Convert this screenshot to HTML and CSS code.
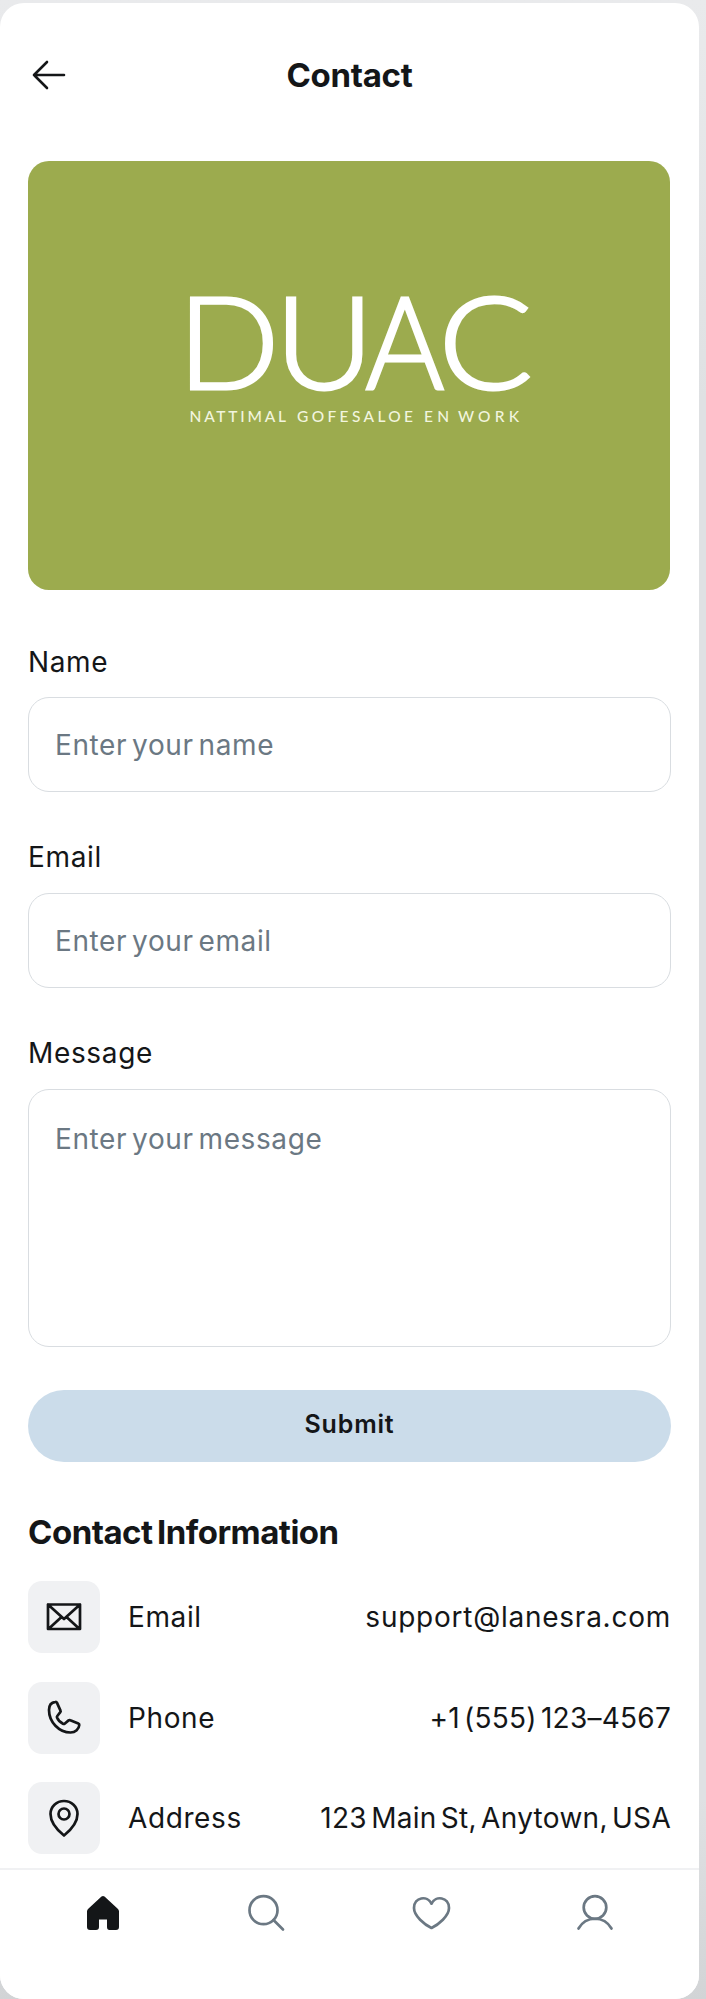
FILE: index.html
```html
<!DOCTYPE html>
<html lang="en">
<head>
<meta charset="utf-8">
<title>Contact</title>
<link rel="stylesheet" href="styles.css">
</head>
<body>
<main class="screen">
  <header class="topbar">
    <svg class="back" viewBox="0 0 42 42"><path d="M36 21H6M19 8 6 21l13 13"/></svg>
    <h1 class="title">Contact</h1>
  </header>
  <svg class="hero" viewBox="0 0 642 429">
    <g class="brand">
      <text transform="translate(149.500 227.500) scale(1.040 1)">D</text>
      <text transform="translate(246.500 227.500) scale(1.060 1)">U</text>
      <text transform="translate(337.500 227.500) scale(.930 1)">A</text>
      <text transform="translate(410.500 227.500) scale(1.080 1)">C</text>
    </g>
    <text class="tagline" y="260.500"><tspan x="161.500" textLength="96">NATTIMAL</tspan> <tspan x="269" textLength="116">GOFESALOE</tspan> <tspan x="396" textLength="25">EN</tspan> <tspan x="430" textLength="61">WORK</tspan></text>
  </svg>
  <form class="form">
    <label class="field"><span class="label">Name</span><input class="control" placeholder="Enter your name"></label>
    <label class="field"><span class="label">Email</span><input class="control" placeholder="Enter your email"></label>
    <label class="field"><span class="label">Message</span><textarea class="control area" placeholder="Enter your message"></textarea></label>
    <button class="submit" type="button">Submit</button>
  </form>
  <section class="info">
    <h2 class="heading">Contact Information</h2>
    <div class="row">
      <span class="tile"><svg class="icon" viewBox="0 0 44 44"><path d="M6 9.500h32v24.500H6zM6 9.500l16 14.500 16-14.500M7 33.500l12.500-11.500M37 33.500 24.500 22"/></svg></span>
      <span class="key">Email</span><span class="value v-email">support@lanesra.com</span>
    </div>
    <div class="row">
      <span class="tile"><svg class="icon" viewBox="0 0 44 44"><path d="M13.500 5.800C10 6.200 7 8.500 7 14c0 12 10 22.500 21.500 22.500 5 0 8.500-3.500 8.800-7.500.1-.8-.3-1.300-1-1.600l-8-3.200c-.7-.3-1.200-.2-1.700.2l-4 3.300c-.5.4-1 .4-1.600.1-3-1.600-5-3.800-6-6.300-.2-.6-.1-1 .3-1.500l3-3.800c.4-.5.5-1 .2-1.600l-3.600-8c-.3-.6-.8-.9-1.400-.8z"/></svg></span>
      <span class="key">Phone</span><span class="value v-phone">+1 (555) 123–4567</span>
    </div>
    <div class="row">
      <span class="tile"><svg class="icon" viewBox="0 0 44 44"><path d="M22 39.500c-5-4-13.500-12.500-13.500-21.500a13.500 13 0 0 1 27 0c0 9-8.500 17.500-13.500 21.500z"/><circle cx="22" cy="18" r="5.500"/></svg></span>
      <span class="key">Address</span><span class="value v-address">123 Main St, Anytown, USA</span>
    </div>
  </section>
  <nav class="nav">
    <svg class="tab active" viewBox="0 0 44 44"><path d="M20.500 5.600q1.500-1.400 3 0L37 18q1 1 1 2.500V36q0 3-3 3h-6.500q-2.500 0-2.500-3v-7.500h-8V36q0 3-3 3H9q-3 0-3-3V20.500Q6 19 7 18z"/></svg>
    <svg class="tab" viewBox="0 0 44 44"><circle cx="18.500" cy="19.200" r="14"/><path d="m28.500 29 9.500 9.500"/></svg>
    <svg class="tab" viewBox="0 0 44 44"><path d="M22.500 37C15.500 33.500 5 25 5 17 5 6 18.500 4 22.500 12.700 26.500 4 40 6 40 17c0 8-10.500 16.500-17.500 20z"/></svg>
    <svg class="tab" viewBox="0 0 44 44"><circle cx="22" cy="16.500" r="11.300"/><path d="M5.500 37.500C13 24.500 31 24.500 38.500 37.500"/></svg>
  </nav>
</main>
</body>
</html>
```
FILE: styles.css
```css
* { box-sizing: border-box; }
body {
  margin: 0;
  height: 1999px;
  padding: 3px 7px 0 0;
  background: linear-gradient(#e9eaec, #dfe1e3 20%, #dfe1e3 90%, #d2d4d6);
  font-family: Inter, "Open Sans", sans-serif;
  color: #141618;
}
.screen {
  display: flex;
  flex-direction: column;
  height: 1996px;
  border-radius: 24px;
  background: #fff;
  overflow: hidden;
}
.topbar {
  display: grid;
  grid-template-columns: 42px 1fr 42px;
  align-items: center;
  flex: none;
  height: 158px;
  padding: 0 28px 14px;
}
.back { width: 42px; height: 42px; fill: none; stroke: #141618; stroke-width: 2.600; stroke-linecap: round; stroke-linejoin: round; }
.title { margin: 0; text-align: center; font-size: 33px; line-height: 42px; font-weight: 650; letter-spacing: -0.300px; }
.hero { width: 642px; height: 429px; margin-left: 28px; border-radius: 21px; background: #9cab4e; flex: none; }
.brand { fill: #fff; stroke: #fff; stroke-width: 3; font: 300 129px Lato, sans-serif; }
.tagline { fill: #f2f5df; font: 500 15.500px Lato, sans-serif; }
.form { display: flex; flex-direction: column; flex: none; padding: 51px 28px 0; }
.field { display: flex; flex-direction: column; }
.field + .field { margin-top: 44px; }
.label { font-size: 28px; line-height: 42px; height: 56px; font-weight: 440; letter-spacing: 0.650px; }
.field + .field .label { height: 57px; }
.control {
  width: 100%;
  height: 95px;
  padding: 1px 26px 0;
  border: 1px solid #d9dde1;
  border-radius: 21px;
  background: #fff;
  font: 370 28px/42px Inter, sans-serif;
  letter-spacing: 0.600px;
  word-spacing: -3.500px;
  resize: none;
  outline: 0;
}
.control::placeholder { color: #6b7883; opacity: 1; }
.area { height: 258px; padding-top: 28px; overflow: hidden; }
.submit {
  height: 72px;
  margin-top: 43px;
  padding: 0 0 5px;
  border: 0;
  border-radius: 36px;
  background: #cbdcea;
  color: #141618;
  font: 640 25px/36px Inter, sans-serif;
  letter-spacing: 0.800px;
}
.info { display: flex; flex-direction: column; flex: none; padding: 50px 28px 0; }
.heading { margin: 0 0 28px; font-size: 33px; line-height: 41px; font-weight: 650; letter-spacing: -0.500px; word-spacing: -3px; }
.row { display: flex; align-items: center; height: 72px; margin-bottom: 28.500px; font-size: 28px; line-height: 42px; font-weight: 370; }
.row:last-child { margin-bottom: 0; }
.tile { display: grid; place-items: center; width: 72px; height: 72px; border-radius: 14px; background: #f0f1f3; }
.icon { width: 44px; height: 44px; fill: none; stroke: #141618; stroke-width: 2.700; stroke-linejoin: round; stroke-linecap: round; }
.key { margin-left: 28px; letter-spacing: 0.600px; }
.value { margin-left: auto; white-space: nowrap; }
.v-email { letter-spacing: 0.750px; }
.v-phone { letter-spacing: 0.250px; word-spacing: -4px; }
.v-address { letter-spacing: 0.300px; word-spacing: -4px; }
.nav {
  display: flex;
  justify-content: space-between;
  align-items: flex-start;
  height: 131px;
  margin-top: auto;
  padding: 21px 82px 0 81px;
  border-top: 2px solid #f0f1f3;
  background: #fff;
  flex: none;
}
.tab { width: 44px; height: 44px; fill: none; stroke: #6b7883; stroke-width: 2.700; stroke-linecap: round; stroke-linejoin: round; }
.active { fill: #141618; stroke: none; }
```
